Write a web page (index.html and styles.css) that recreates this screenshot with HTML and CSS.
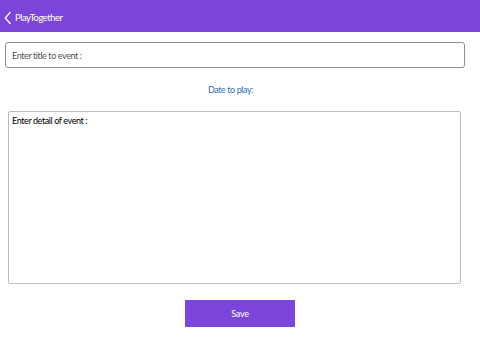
FILE: index.html
```html
<!DOCTYPE html>
<html>
<head>
<meta charset="utf-8">
<link rel="stylesheet" href="styles.css">
</head>
<body>
<header class="appbar">
  <svg class="back" width="8" height="14" viewBox="0 0 8 14"><path d="M6.5 1 L1.3 7 L6.5 13" fill="none" stroke="#fff" stroke-width="1.3"/></svg>
  <span class="apptitle">PlayTogether</span>
</header>
<main class="content">
  <div class="title-input">Enter title to event :</div>
  <div class="date">Date to play:</div>
  <div class="detail">Enter detail of event :</div>
  <div class="actions"><button class="save">Save</button></div>
</main>
</body>
</html>
```
FILE: styles.css
```css
html, body { margin: 0; padding: 0; background: #fff; }
body { font-family: Lato, "Open Sans", sans-serif; width: 480px; height: 360px; overflow: hidden; }
.appbar { height: 32px; background: #7b45dc; display: flex; align-items: center; padding-left: 4px; gap: 3px; box-sizing: border-box; }
.back { display: block; margin-top: 3px; }
.apptitle { color: #fff; font-size: 9.5px; font-weight: 400; padding-top: 2px; letter-spacing: -0.5px; }
.content { display: flex; flex-direction: column; padding: 10px 0 0 0; }
.title-input { margin: 0 15px 0 5px; height: 26px; box-sizing: border-box; border: 1px solid #8f8f8f; border-radius: 3px; font-size: 9px; letter-spacing: -0.4px; color: #555; display: flex; align-items: center; padding-left: 6px; }
.date { text-align: center; color: #2e73b8; font-size: 9px; letter-spacing: -0.4px; margin-top: 16px; height: 12px; line-height: 12px; margin-right: 19px; }
.detail { margin: 15px 19px 0 8px; height: 173px; box-sizing: border-box; border: 1px solid #bdbdbd; border-radius: 2px; font-size: 9px; letter-spacing: -0.4px; color: #000; padding: 3px 3px; }
.actions { display: flex; justify-content: center; margin-top: 16px; }
.save { width: 110px; height: 27px; background: #7b45dc; color: #fff; border: none; font-family: inherit; font-size: 9px; letter-spacing: -0.2px; }
```
